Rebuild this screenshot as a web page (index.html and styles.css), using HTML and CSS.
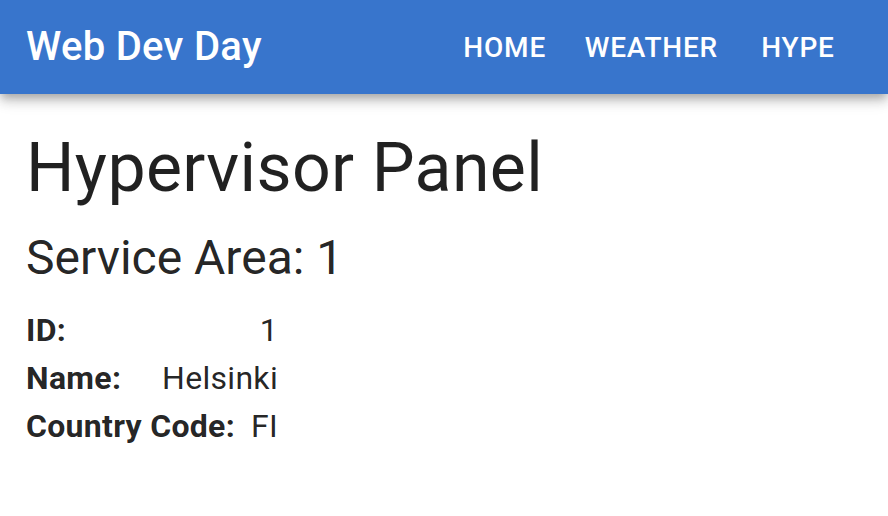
FILE: index.html
```html
<!DOCTYPE html>
<html lang="en">
<head>
<meta charset="utf-8">
<title>Web Dev Day</title>
<link rel="stylesheet" href="styles.css">
</head>
<body>
<header class="appbar">
  <div class="toolbar">
    <h1 class="brand">Web Dev Day</h1>
    <nav class="nav">
      <a class="nav-btn" href="#">Home</a>
      <a class="nav-btn" href="#">Weather</a>
      <a class="nav-btn" href="#">Hype</a>
    </nav>
  </div>
</header>
<main class="content">
  <h2 class="page-title">Hypervisor Panel</h2>
  <h3 class="subtitle">Service Area: 1</h3>
  <div class="details">
    <div class="row"><span class="label">ID:</span><span class="value">1</span></div>
    <div class="row"><span class="label">Name:</span><span class="value">Helsinki</span></div>
    <div class="row"><span class="label">Country Code:</span><span class="value">FI</span></div>
  </div>
</main>
</body>
</html>
```

FILE: styles.css
```css
* { box-sizing: border-box; }

html, body {
  margin: 0;
  padding: 0;
  background: #ffffff;
  font-family: Roboto, "Liberation Sans", sans-serif;
  color: rgba(0, 0, 0, 0.87);
}

.appbar {
  background: #3875cc;
  color: #ffffff;
  box-shadow: 0 4px 8px -2px rgba(0,0,0,0.2), 0 8px 10px 0 rgba(0,0,0,0.14), 0 2px 20px 0 rgba(0,0,0,0.12);
  position: relative;
  z-index: 1;
}

.toolbar {
  height: 94px;
  display: flex;
  align-items: center;
  padding: 0 26px;
}

.brand {
  margin: 0;
  flex: 1;
  font-size: 40px;
  font-weight: 500;
  line-height: 1.6;
  letter-spacing: 0.3px;
}

.nav {
  display: flex;
  align-items: center;
}

.nav-btn {
  min-width: 128px;
  padding: 12px 16px;
  text-align: center;
  color: #ffffff;
  text-decoration: none;
  text-transform: uppercase;
  font-size: 28px;
  font-weight: 500;
  line-height: 1.75;
  letter-spacing: 0.8px;
}

.content {
  padding: 32px 26px;
}

.page-title {
  margin: 0 0 16px;
  font-size: 68px;
  font-weight: 400;
  line-height: 84px;
  letter-spacing: 0.35px;
}

.subtitle {
  margin: 0 0 16px;
  font-size: 48px;
  font-weight: 400;
  line-height: 64px;
}

.details {
  display: inline-flex;
  flex-direction: column;
  font-size: 32px;
  line-height: 48px;
  letter-spacing: 0.3px;
}

.row {
  display: flex;
  justify-content: space-between;
}

.label {
  font-weight: 700;
  margin-right: 16px;
}

.value {
  font-weight: 400;
}
```
